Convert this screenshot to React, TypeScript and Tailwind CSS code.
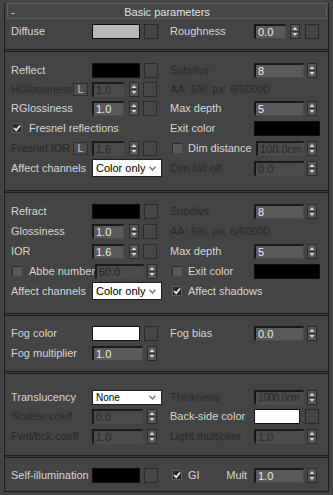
import React from 'react';

type Kids = { children?: React.ReactNode };

const Label = ({ children, dim = false, className = '' }: Kids & { dim?: boolean; className?: string }) => (
  <span className={`${dim ? 'text-[#2b2b2b]' : 'text-[#d6d6d6]'} whitespace-nowrap ${className}`}>{children}</span>
);

const Cell = ({ children, className = '' }: Kids & { className?: string }) => (
  <div className={`flex items-center ${className}`}>{children}</div>
);

const Num = ({ v, w, dim = false, size = 'text-[11px]' }: { v: string; w: string; dim?: boolean; size?: string }) => (
  <div
    className={`${w} ${size} h-[15px] shrink-0 overflow-hidden whitespace-nowrap border-t-2 border-l-2 border-r border-b border-t-[#1a1a1a] border-l-[#1a1a1a] border-r-[#4a4a4a] border-b-[#4a4a4a] pl-[2px] leading-[12px] ${
      dim ? 'bg-[#4b4b4b] text-[#2a2a2a]' : 'bg-[#5a5a5a] text-[#ececec]'
    }`}
  >
    {v}
  </div>
);

const Spin = ({ className = '' }: { className?: string }) => (
  <div className={`w-[10px] h-[15px] shrink-0 border border-[#2b2b2b] bg-[#555555] flex items-center justify-center ${className}`}>
    <svg width="8" height="13" viewBox="0 0 8 13">
      <polygon points="1.5,5 4,2 6.5,5" fill="#d9d9d9" />
      <line x1="0" y1="6.5" x2="8" y2="6.5" stroke="#3a3a3a" strokeWidth="1" />
      <polygon points="1.5,8 4,11 6.5,8" fill="#d9d9d9" />
    </svg>
  </div>
);

const MapBtn = ({ className = '' }: { className?: string }) => (
  <div className={`w-[14px] h-[15px] shrink-0 border border-[#2c2c2c] bg-[#474747] ${className}`} />
);

const Swatch = ({ color, w = 'w-[48px]' }: { color: string; w?: string }) => (
  <div className={`${w} h-[15px] shrink-0 border border-[#101010] ${color}`} />
);

const Check = ({ on = false, className = '' }: { on?: boolean; className?: string }) =>
  on ? (
    <div className={`w-[10px] h-[10px] shrink-0 border border-[#5c5c5c] bg-[#2a2a2a] flex items-center justify-center ${className}`}>
      <svg width="8" height="8" viewBox="0 0 8 8">
        <path d="M1 4 L3.2 6.3 L7 1.5" fill="none" stroke="#f0f0f0" strokeWidth="1.7" />
      </svg>
    </div>
  ) : (
    <div className={`w-[10px] h-[10px] shrink-0 border-t border-l border-[#2a2a2a] bg-[#595959] ${className}`} />
  );

const LBtn = () => (
  <div className="w-[15px] h-[13px] shrink-0 border border-[#2c2c2c] bg-[#4d4d4d] text-[#c8c8c8] text-[11px] leading-[11px] flex items-center justify-center">
    L
  </div>
);

const Select = ({ v, small = false }: { v: string; small?: boolean }) => (
  <div
    className={`w-[70px] shrink-0 bg-white border border-[#1e1e1e] flex items-center justify-between pl-[3px] pr-[5px] text-black ${
      small ? 'h-[15px] text-[10px]' : 'h-[18px] text-[11px]'
    }`}
  >
    <span>{v}</span>
    <svg width="7" height="5" viewBox="0 0 7 5">
      <path d="M0.5 0.8 L3.5 4 L6.5 0.8" fill="none" stroke="#777" strokeWidth="1.5" />
    </svg>
  </div>
);

const Sep = () => <div className="h-[3px] border-y border-[#1f1f1f] bg-[#3d3d3d]" />;

const L = 'w-[81px] shrink-0';
const R = 'w-[84px] shrink-0';

export default function App() {
  return (
    <div className="w-[333px] h-[495px] bg-[#444444] pt-[10px] font-['Liberation_Sans',Arial,sans-serif] text-[11px] overflow-hidden">
      <div className="ml-[4px] w-[325px] border-x border-b border-[#1f1f1f]">
        <div className="-mt-[7px] ml-[2px] mr-[1px] h-[16px] border border-[#5f5f5f] bg-[#474747] grid grid-cols-[1fr_auto_1fr] items-center text-[#e2e2e2]">
          <span className="pl-[3px] leading-none">-</span>
          <span>Basic parameters</span>
          <span />
        </div>

        {/* Diffuse */}
        <div className="grid grid-cols-[151px_150px] gap-x-[8px] grid-rows-[19px] pl-[6px] pt-[3px] pb-[8px]">
          <Cell>
            <Label className={L}>Diffuse</Label>
            <Swatch color="bg-[#b9b9b9]" />
            <MapBtn className="ml-[4px]" />
          </Cell>
          <Cell>
            <Label className={R}>Roughness</Label>
            <Num v="0.0" w="w-[32px]" />
            <Spin className="ml-[4px]" />
            <MapBtn className="ml-[5px]" />
          </Cell>
        </div>
        <Sep />

        {/* Reflect */}
        <div className="grid grid-cols-[151px_150px] gap-x-[8px] grid-rows-[20px_19px_19px_20px_20px_20px] pl-[6px] pt-[8px] pb-[12px]">
          <Cell>
            <Label className={L}>Reflect</Label>
            <Swatch color="bg-black" />
            <MapBtn className="ml-[4px]" />
          </Cell>
          <Cell>
            <Label dim className={R}>Subdivs</Label>
            <Num v="8" w="w-[50px]" />
            <Spin className="ml-[3px]" />
          </Cell>

          <Cell>
            <div className={`${L} flex items-center justify-between pr-[4px]`}>
              <Label dim>HGlossiness</Label>
              <LBtn />
            </div>
            <Num v="1.0" w="w-[32px]" dim />
            <Spin className="ml-[5px]" />
            <MapBtn className="ml-[4px]" />
          </Cell>
          <Cell>
            <Label dim>AA: 6/6; px: 6/60000</Label>
          </Cell>

          <Cell>
            <Label className={L}>RGlossiness</Label>
            <Num v="1.0" w="w-[32px]" />
            <Spin className="ml-[5px]" />
            <MapBtn className="ml-[4px]" />
          </Cell>
          <Cell>
            <Label className={R}>Max depth</Label>
            <Num v="5" w="w-[50px]" />
            <Spin className="ml-[3px]" />
          </Cell>

          <Cell>
            <Check on className="ml-[1px]" />
            <Label className="ml-[7px]">Fresnel reflections</Label>
          </Cell>
          <Cell>
            <Label className={R}>Exit color</Label>
            <Swatch color="bg-black" w="w-[66px]" />
          </Cell>

          <Cell>
            <div className={`${L} flex items-center justify-between pr-[4px]`}>
              <Label dim>Fresnel IOR</Label>
              <LBtn />
            </div>
            <Num v="1.6" w="w-[32px]" dim />
            <Spin className="ml-[5px]" />
            <MapBtn className="ml-[4px]" />
          </Cell>
          <Cell>
            <div className="w-[86px] shrink-0 flex items-center">
              <Check className="ml-[2px]" />
              <Label className="ml-[6px]">Dim distance</Label>
            </div>
            <Num v="100.0cm" w="w-[48px]" dim />
            <Spin className="ml-[3px]" />
          </Cell>

          <Cell>
            <Label className={L}>Affect channels</Label>
            <Select v="Color only" />
          </Cell>
          <Cell>
            <Label dim className={R}>Dim fall off</Label>
            <Num v="0.0" w="w-[50px]" dim />
            <Spin className="ml-[3px]" />
          </Cell>
        </div>
        <Sep />

        {/* Refract */}
        <div className="grid grid-cols-[151px_150px] gap-x-[8px] grid-rows-[20px_20px_20px_20px_20px] pl-[6px] pt-[8px] pb-[12px]">
          <Cell>
            <Label className={L}>Refract</Label>
            <Swatch color="bg-black" />
            <MapBtn className="ml-[4px]" />
          </Cell>
          <Cell>
            <Label dim className={R}>Subdivs</Label>
            <Num v="8" w="w-[50px]" />
            <Spin className="ml-[3px]" />
          </Cell>

          <Cell>
            <Label className={L}>Glossiness</Label>
            <Num v="1.0" w="w-[32px]" />
            <Spin className="ml-[5px]" />
            <MapBtn className="ml-[4px]" />
          </Cell>
          <Cell>
            <Label dim>AA: 6/6; px: 6/60000</Label>
          </Cell>

          <Cell>
            <Label className={L}>IOR</Label>
            <Num v="1.6" w="w-[32px]" />
            <Spin className="ml-[5px]" />
            <MapBtn className="ml-[4px]" />
          </Cell>
          <Cell>
            <Label className={R}>Max depth</Label>
            <Num v="5" w="w-[50px]" />
            <Spin className="ml-[3px]" />
          </Cell>

          <Cell>
            <div className="w-[84px] shrink-0 flex items-center">
              <Check className="ml-[1px]" />
              <Label className="ml-[7px]">Abbe number</Label>
            </div>
            <Num v="50.0" w="w-[49px]" dim />
            <Spin className="ml-[3px]" />
          </Cell>
          <Cell>
            <div className={`${R} flex items-center`}>
              <Check className="ml-[2px]" />
              <Label className="ml-[6px]">Exit color</Label>
            </div>
            <Swatch color="bg-black" w="w-[66px]" />
          </Cell>

          <Cell>
            <Label className={L}>Affect channels</Label>
            <Select v="Color only" />
          </Cell>
          <Cell>
            <Check on className="ml-[2px]" />
            <Label className="ml-[6px]">Affect shadows</Label>
          </Cell>
        </div>
        <Sep />

        {/* Fog */}
        <div className="grid grid-cols-[151px_150px] gap-x-[8px] grid-rows-[20px_20px] pl-[6px] pt-[7px] pb-[8px]">
          <Cell>
            <Label className={L}>Fog color</Label>
            <Swatch color="bg-white" />
            <MapBtn className="ml-[4px]" />
          </Cell>
          <Cell>
            <Label className={R}>Fog bias</Label>
            <Num v="0.0" w="w-[50px]" />
            <Spin className="ml-[3px]" />
          </Cell>

          <Cell>
            <Label className={L}>Fog multiplier</Label>
            <Num v="1.0" w="w-[51px]" />
            <Spin className="ml-[4px]" />
          </Cell>
          <Cell />
        </div>
        <Sep />

        {/* Translucency */}
        <div className="grid grid-cols-[151px_150px] gap-x-[8px] grid-rows-[20px_19px_20px] pl-[6px] pt-[13px] pb-[9px]">
          <Cell>
            <Label className={L}>Translucency</Label>
            <Select v="None" small />
          </Cell>
          <Cell>
            <Label dim className={R}>Thickness</Label>
            <Num v="1000.0cm" w="w-[50px]" dim size="text-[10px] tracking-[-0.3px]" />
            <Spin className="ml-[3px]" />
          </Cell>

          <Cell>
            <Label dim className={L}>Scatter coeff</Label>
            <Num v="0.0" w="w-[51px]" dim />
            <Spin className="ml-[4px]" />
          </Cell>
          <Cell>
            <Label className={R}>Back-side color</Label>
            <Swatch color="bg-white" w="w-[46px]" />
            <MapBtn className="ml-[5px]" />
          </Cell>

          <Cell>
            <Label dim className={L}>Fwd/bck coeff</Label>
            <Num v="1.0" w="w-[51px]" dim />
            <Spin className="ml-[4px]" />
          </Cell>
          <Cell>
            <Label dim className={R}>Light multiplier</Label>
            <Num v="1.0" w="w-[50px]" dim />
            <Spin className="ml-[3px]" />
          </Cell>
        </div>
        <Sep />

        {/* Self-illumination */}
        <div className="grid grid-cols-[151px_150px] gap-x-[8px] grid-rows-[20px] pl-[6px] pt-[7px] pb-[6px]">
          <Cell>
            <Label className={L}>Self-illumination</Label>
            <Swatch color="bg-black" />
            <MapBtn className="ml-[4px]" />
          </Cell>
          <Cell>
            <div className={`${R} flex items-center`}>
              <Check on className="ml-[2px]" />
              <Label className="ml-[6px]">GI</Label>
              <Label className="ml-auto mr-[7px]">Mult</Label>
            </div>
            <Num v="1.0" w="w-[50px]" />
            <Spin className="ml-[3px]" />
          </Cell>
        </div>
      </div>
    </div>
  );
}
